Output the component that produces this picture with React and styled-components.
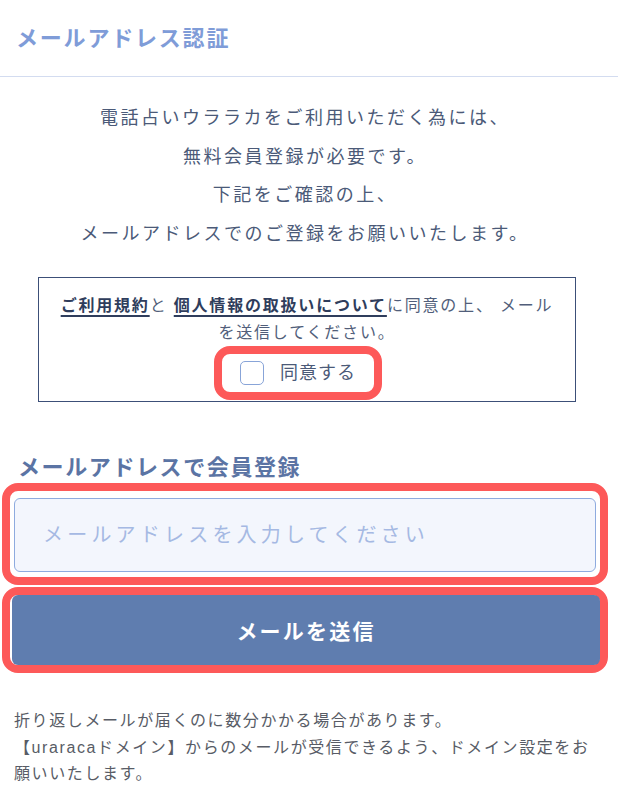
import React from 'react';
import styled, { createGlobalStyle } from 'styled-components';

const GlobalStyle = createGlobalStyle`
  body {
    margin: 0;
    background: #ffffff;
    font-family: 'Liberation Sans', 'Noto Sans CJK JP', sans-serif;
  }
`;

const Page = styled.div`
  width: 618px;
  min-height: 800px;
  background: #ffffff;
`;

const Header = styled.header`
  height: 77px;
  display: flex;
  align-items: center;
  padding: 0 16px;
  border-bottom: 1.5px solid #d3dcf0;
  box-sizing: border-box;
`;

const Title = styled.h1`
  margin: 0 0 5px;
  font-size: 22px;
  font-weight: 700;
  letter-spacing: 1.8px;
  color: #7f9cd8;
`;

const Main = styled.main`
  display: flex;
  flex-direction: column;
  padding: 0 10px 0 2px;
`;

const Intro = styled.p`
  margin: 22px 0 0;
  text-align: center;
  font-size: 18px;
  line-height: 38.5px;
  letter-spacing: 2.5px;
  color: #4b5a78;
`;

const AgreeBox = styled.div`
  align-self: center;
  width: 538px;
  box-sizing: border-box;
  margin: 24px 0 0 4px;
  padding: 14px 12px 1px;
  border: 1.5px solid #3c4f78;
  text-align: center;
`;

const AgreeText = styled.p`
  margin: 0;
  font-size: 16px;
  line-height: 27px;
  letter-spacing: 1.8px;
  color: #515e7a;
`;

const TermsLink = styled.a`
  font-weight: 700;
  color: #2f3d5c;
  text-decoration: underline;
  text-decoration-thickness: 2px;
  text-underline-offset: 4px;
`;

const Highlight = styled.div`
  display: inline-flex;
  align-items: center;
  border: 8px solid #fd5959;
  border-radius: 16px;
  padding: 7px 18px;
  margin-right: 18px;
`;

const CheckLabel = styled.label`
  display: flex;
  align-items: center;
  gap: 16px;
  font-size: 18px;
  line-height: 24px;
  letter-spacing: 1px;
  color: #4b5a78;
  cursor: pointer;
`;

const CheckBox = styled.span`
  width: 22px;
  height: 22px;
  border: 1.5px solid #88a4d8;
  border-radius: 5px;
  background: #ffffff;
`;

const SectionTitle = styled.h2`
  margin: 51px 0 0;
  padding-left: 16px;
  font-size: 22px;
  line-height: 30px;
  font-weight: 700;
  letter-spacing: 1.6px;
  color: #5b74a4;
`;

const Frame = styled.div`
  border: 8px solid #fd5959;
  border-radius: 16px;
  padding: ${(p) => p.$pad};
  margin-top: ${(p) => p.$top || '0px'};
`;

const EmailInput = styled.input`
  display: block;
  width: 100%;
  height: 74px;
  box-sizing: border-box;
  padding: 0 28px;
  background: #f3f6fd;
  border: 1.5px solid #8eabdf;
  border-radius: 6px;
  font-family: 'Liberation Sans', 'Noto Sans CJK JP', sans-serif;
  font-size: 20px;
  letter-spacing: 4.2px;
  color: #333;
  outline: none;
  &::placeholder {
    color: #a5b9e3;
  }
`;

const SendButton = styled.button`
  display: block;
  width: 100%;
  height: 70px;
  border: none;
  border-radius: 6px;
  background: #5f7daf;
  color: #ffffff;
  font-family: 'Liberation Sans', 'Noto Sans CJK JP', sans-serif;
  font-size: 21px;
  font-weight: 700;
  letter-spacing: 2.2px;
  cursor: pointer;
`;

const Notice = styled.p`
  margin: 35px 0 0;
  padding: 0 4px 0 12px;
  font-size: 16px;
  line-height: 26.5px;
  letter-spacing: 0.1em;
  color: #585c66;
`;

export default function App() {
  return (
    <Page>
      <GlobalStyle />
      <Header>
        <Title>メールアドレス認証</Title>
      </Header>
      <Main>
        <Intro>
          電話占いウララカをご利用いただく為には、
          <br />
          無料会員登録が必要です。
          <br />
          下記をご確認の上、
          <br />
          メールアドレスでのご登録をお願いいたします。
        </Intro>

        <AgreeBox>
          <AgreeText>
            <TermsLink href="#">ご利用規約</TermsLink>と{' '}
            <TermsLink href="#">個人情報の取扱いについて</TermsLink>に同意の上、 メール
            <br />
            を送信してください。
          </AgreeText>
          <Highlight>
            <CheckLabel>
              <CheckBox />
              同意する
            </CheckLabel>
          </Highlight>
        </AgreeBox>

        <SectionTitle>メールアドレスで会員登録</SectionTitle>
        <Frame $pad="7px 4px 5px">
          <EmailInput type="email" placeholder="メールアドレスを入力してください" />
        </Frame>
        <Frame $pad="0 0 0 2px" $top="2px">
          <SendButton type="button">メールを送信</SendButton>
        </Frame>

        <Notice>
          折り返しメールが届くのに数分かかる場合があります。
          <br />
          【uraracaドメイン】からのメールが受信できるよう、ドメイン設定をお
          <br />
          願いいたします。
        </Notice>
      </Main>
    </Page>
  );
}
